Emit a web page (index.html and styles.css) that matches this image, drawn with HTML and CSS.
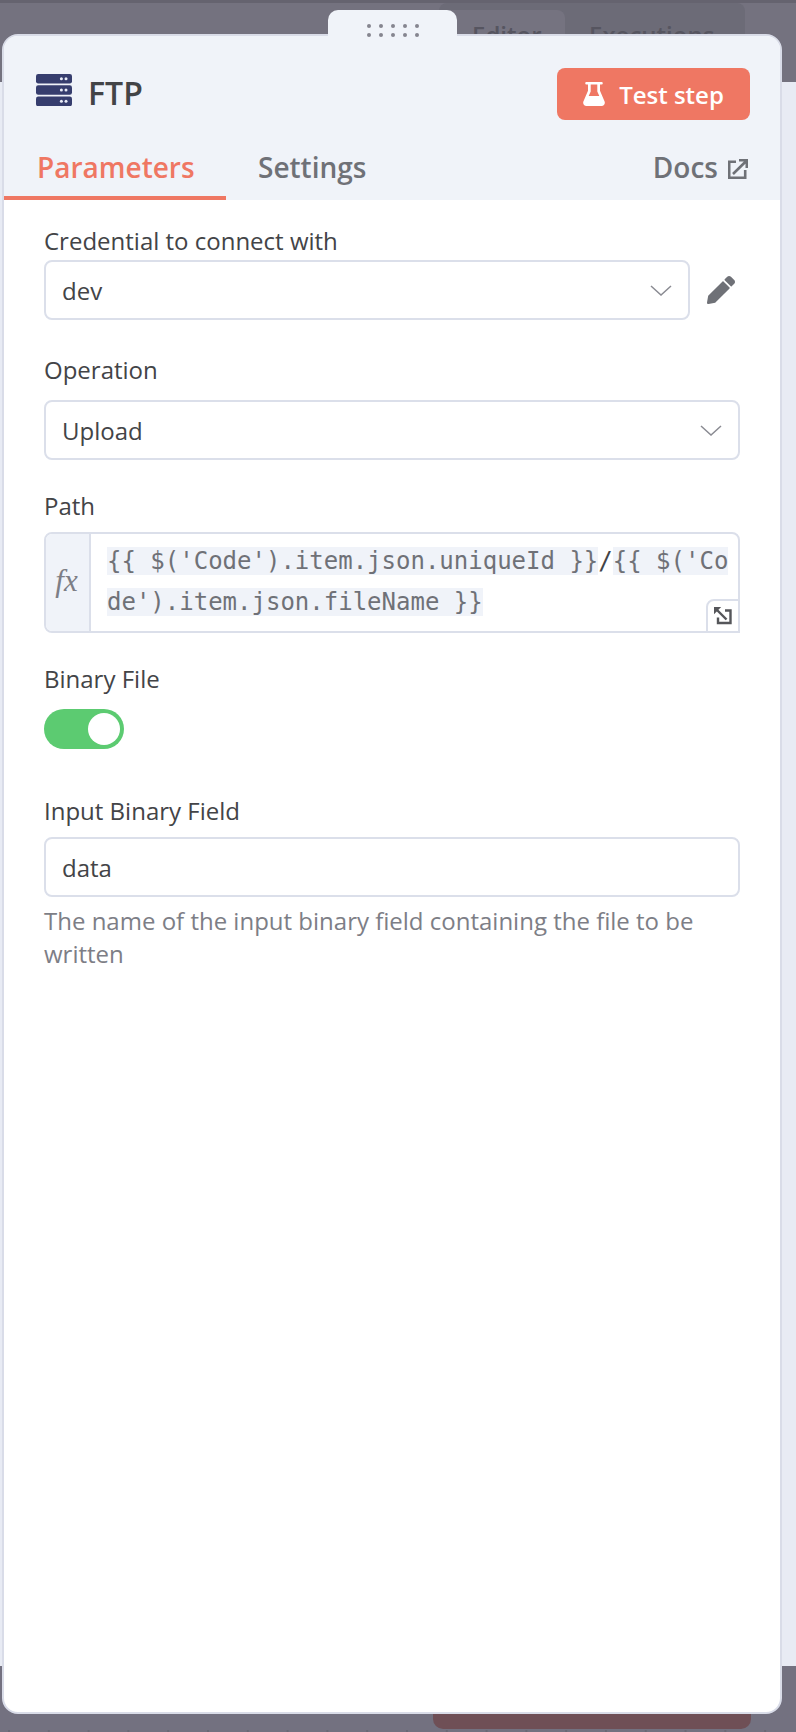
FILE: index.html
```html
<!DOCTYPE html>
<html lang="en">
<head>
<meta charset="utf-8">
<title>FTP</title>
<link rel="stylesheet" href="styles.css">
</head>
<body>
<div class="backdrop">
  <div class="topbar">
    <div class="switcher">
      <div class="switch-tab switch-active">Editor</div>
      <div class="switch-tab switch-second">Executions</div>
    </div>
  </div>
  <div class="canvas"></div>
  <div class="footer">
    <div class="footer-button"></div>
  </div>
  <div class="dots"></div>
</div>

<div class="handle" aria-hidden="true">
  <div class="handle-dots">
    <i></i><i></i><i></i><i></i><i></i>
    <i></i><i></i><i></i><i></i><i></i>
  </div>
</div>

<main class="panel">
  <header class="head">
    <div class="title-row">
      <div class="title">
        <svg class="server" viewBox="0 0 36 32" aria-hidden="true">
          <rect x="0" y="0" width="36" height="9.5" rx="2.2"/>
          <rect x="0" y="11.3" width="36" height="9.5" rx="2.2"/>
          <rect x="0" y="22.6" width="36" height="9.5" rx="2.2"/>
          <g class="led">
            <circle cx="25.4" cy="4.8" r="1.5"/><circle cx="30" cy="4.8" r="1.5"/>
            <circle cx="25.4" cy="16" r="1.5"/><circle cx="30" cy="16" r="1.5"/>
            <circle cx="25.4" cy="27.3" r="1.5"/><circle cx="30" cy="27.3" r="1.5"/>
          </g>
        </svg>
        <span class="title-text">FTP</span>
      </div>
      <button class="test-btn" type="button">
        <svg class="flask" viewBox="0 0 22 24" aria-hidden="true">
          <path d="M3.500 0h15a1 1 0 0 1 0 2.600H17v6.200l4.600 10.600c.8 2.100-.6 4.600-3 4.600H3.400c-2.400 0-3.800-2.500-3-4.600L5 8.800V2.600H3.500a1 1 0 0 1 0-2.600zM7.700 2.600v6.800L5.700 14h10.600l-2-4.600V2.600z" fill-rule="evenodd"/>
        </svg>
        <span>Test step</span>
      </button>
    </div>
    <nav class="tabs">
      <a class="tab tab-active">Parameters</a>
      <a class="tab tab-second">Settings</a>
      <a class="tab tab-docs">Docs
        <svg class="ext" viewBox="0 0 20 20" aria-hidden="true">
          <path d="M8 2.800H1.200v16h16V11"/>
          <path d="M5 15L18.500 1.800M11 1.300h7.800V9"/>
        </svg>
      </a>
    </nav>
  </header>

  <section class="form">
    <div class="param-first">
      <label class="label label-tight">Credential to connect with</label>
      <div class="cred-row">
        <div class="input select">dev
          <svg class="chev" viewBox="0 0 22 11" aria-hidden="true"><path d="M1 1l10 9 10-9"/></svg>
        </div>
        <svg class="pencil" viewBox="0 0 512 512" aria-hidden="true">
          <path d="M497.900 142.100l-46.100 46.100c-4.700 4.700-12.300 4.700-17 0l-111-111c-4.700-4.700-4.700-12.300 0-17l46.100-46.100c18.700-18.700 49.100-18.700 67.900 0l60.100 60.100c18.800 18.700 18.800 49.100 0 67.900zM284.200 99.800L21.600 362.400.4 483.900c-2.900 16.400 11.400 30.600 27.800 27.800l121.500-21.300 262.600-262.600c4.700-4.700 4.700-12.300 0-17l-111-111c-4.800-4.700-12.400-4.700-17.100 0z"/>
        </svg>
      </div>
    </div>

    <div class="param-operation">
      <label class="label label-wide">Operation</label>
      <div class="input select">Upload
        <svg class="chev" viewBox="0 0 22 11" aria-hidden="true"><path d="M1 1l10 9 10-9"/></svg>
      </div>
    </div>

    <div class="param">
      <label class="label">Path</label>
      <div class="expr">
        <div class="fx">fx</div>
        <div class="code"><span class="res">{{ $('Code').item.json.uniqueId }}</span>/<span class="res">{{ $('Code').item.json.fileName }}</span></div>
        <div class="expand">
          <svg viewBox="0 0 20 20" aria-hidden="true">
            <path class="expand-arrow" d="M3 3l10.500 10.500"/>
            <path class="expand-head" d="M1 1h7.200L1 8.200z"/>
            <path class="expand-arrow" d="M12 4.500h5.500v12.500H5V11.500"/>
          </svg>
        </div>
      </div>
    </div>

    <div class="param">
      <label class="label label-wide">Binary File</label>
      <div class="toggle"><span class="knob"></span></div>
    </div>

    <div class="param-last">
      <label class="label">Input Binary Field</label>
      <div class="input">data</div>
      <p class="hint">The name of the input binary field containing the file to be written</p>
    </div>
  </section>
</main>
</body>
</html>
```
FILE: styles.css
```css
* { box-sizing: border-box; }

html, body {
  margin: 0;
  padding: 0;
}

body {
  position: relative;
  width: 796px;
  height: 1732px;
  overflow: hidden;
  font-family: "Open Sans", "Liberation Sans", sans-serif;
  color: #434447;
  background: #737180;
}

/* Dimmed app behind the panel */
.backdrop {
  display: flex;
  flex-direction: column;
  height: 1732px;
}

.topbar {
  display: flex;
  justify-content: flex-end;
  height: 82px;
  padding-right: 51px;
  background: #74727f;
  border-top: 3px solid #65636f;
}

.switcher {
  display: flex;
  width: 306px;
  height: 60px;
  padding: 7px 1px 0;
  background: #6c6b77;
  border-radius: 8px;
}

.switch-tab {
  width: 125px;
  padding: 9px 0 0 32px;
  font-size: 24px;
  line-height: 32px;
  font-weight: 600;
  color: #565560;
  white-space: nowrap;
}

.switch-second { padding-left: 24px; }

.switch-active {
  background: #757380;
  border-radius: 8px;
}

.canvas {
  height: 1584px;
  background: #e8ebf4;
}

.footer {
  display: flex;
  justify-content: flex-end;
  flex: 1;
  padding-right: 45px;
}

.footer-button {
  width: 318px;
  height: 63px;
  background: #6f4f56;
  border-radius: 0 0 10px 10px;
}

.dots {
  height: 2px;
  background-image: linear-gradient(90deg, #686773 2px, transparent 2px);
  background-size: 39.800px 2px;
  background-position: 8px 0;
}

/* Drag handle sits over the top of the panel */
.handle {
  position: absolute;
  z-index: 1;
  left: 328px;
  top: 10px;
  width: 129px;
  height: 30px;
  background: #f0f3f9;
  border-radius: 10px 10px 0 0;
}

.handle-dots {
  display: grid;
  grid-template-columns: repeat(5, 4px);
  gap: 5px 8px;
  justify-content: center;
  padding-top: 14px;
}

.handle-dots i {
  width: 4px;
  height: 4px;
  border-radius: 50%;
  background: #85858f;
}

/* Panel */
.panel {
  position: absolute;
  left: 2px;
  top: 34px;
  width: 780px;
  height: 1680px;
  display: flex;
  flex-direction: column;
  background: #fff;
  border: 2px solid #d9dce8;
  border-radius: 16px;
  overflow: hidden;
}

.head {
  height: 164px;
  display: flex;
  flex-direction: column;
  background: #f0f3f9;
}

.title-row {
  display: flex;
  align-items: center;
  justify-content: space-between;
  height: 84px;
  padding: 32px 30px 0 32px;
}

.title {
  display: flex;
  align-items: center;
  gap: 16px;
  margin-bottom: 8px;
}

.server {
  width: 36px;
  height: 32px;
  fill: #363d6e;
}

.server .led { fill: #e9ecf7; }

.title-text {
  margin-top: 5px;
  font-size: 32px;
  line-height: 40px;
  font-weight: 600;
  color: #434447;
}

.test-btn {
  display: flex;
  align-items: center;
  justify-content: center;
  gap: 14px;
  width: 193px;
  height: 52px;
  padding: 0;
  border: 0;
  border-radius: 8px;
  background: #ef7763;
  color: #fff;
  font-family: inherit;
  font-size: 24px;
  font-weight: 600;
}

.flask {
  width: 22px;
  height: 24px;
  fill: #fff;
}

.tabs {
  display: flex;
  flex: 1;
  align-items: flex-end;
  padding-right: 32px;
  font-size: 28px;
  font-weight: 600;
  line-height: 38px;
  color: #6f7177;
}

.tab {
  display: flex;
  align-items: center;
  height: 80px;
  padding-top: 18px;
}

.tab-active {
  width: 222px;
  padding-left: 33px;
  color: #ef7763;
  border-bottom: 4px solid #ef7763;
}

.tab-second {
  margin-left: 32px;
  padding-bottom: 4px;
}

.tab-docs {
  margin-left: auto;
  padding-bottom: 4px;
  gap: 10px;
}

.ext {
  width: 20px;
  height: 20px;
  margin-top: 4px;
  fill: none;
  stroke: #6f7177;
  stroke-width: 2.600;
}

/* Form */
.form {
  flex: 1;
  display: flex;
  flex-direction: column;
  padding: 25px 40px 0 40px;
}

.param { margin-top: 30px; }
.param-first { margin-top: 0; }
.param-operation { margin-top: 34px; }
.param-last { margin-top: 46px; }

.label {
  display: block;
  height: 32px;
  margin-bottom: 10px;
  font-size: 24px;
  line-height: 32px;
}

.label-tight { margin-bottom: 3px; }
.label-wide { margin-bottom: 14px; }

.input {
  position: relative;
  display: flex;
  align-items: center;
  height: 60px;
  padding: 0 16px;
  font-size: 24px;
  background: #fff;
  border: 2px solid #dbdfea;
  border-radius: 8px;
}

.cred-row {
  display: flex;
  align-items: center;
  gap: 17px;
}

.cred-row .input { width: 646px; }

.chev {
  position: absolute;
  right: 16px;
  top: 23px;
  width: 22px;
  height: 11px;
  fill: none;
  stroke: #8a8b92;
  stroke-width: 1.500;
}

.pencil {
  width: 28px;
  height: 28px;
  fill: #6f7177;
}

/* Expression field */
.expr {
  position: relative;
  display: flex;
  height: 101px;
  background: #fff;
  border: 2px solid #dbdfea;
  border-radius: 8px 8px 0 8px;
}

.fx {
  display: flex;
  align-items: center;
  justify-content: center;
  width: 45px;
  flex: none;
  padding: 0 2px 4px 0;
  font-family: "Liberation Serif", serif;
  font-size: 31px;
  font-style: italic;
  color: #7d7e86;
  background: #f0f3f9;
  border-right: 2px solid #dbdfea;
  border-radius: 6px 0 0 6px;
}

.code {
  flex: 1;
  padding: 7px 0 0 16px;
  font-family: "DejaVu Sans Mono", "Liberation Mono", monospace;
  font-size: 24px;
  line-height: 41.300px;
  white-space: pre-wrap;
  word-break: break-all;
  color: #434447;
}

.res {
  color: #6f7177;
  background: #f0f3f9;
}

.expand {
  position: absolute;
  right: -2px;
  bottom: -2px;
  display: flex;
  align-items: center;
  justify-content: center;
  width: 34px;
  height: 34px;
  background: #fff;
  border: 2px solid #dbdfea;
  border-radius: 8px 0 0 0;
}

.expand svg {
  width: 20px;
  height: 20px;
}

.expand-arrow {
  fill: none;
  stroke: #55565a;
  stroke-width: 2.400;
}

.expand-head { fill: #55565a; }

/* Toggle */
.toggle {
  display: flex;
  justify-content: flex-end;
  align-items: center;
  width: 80px;
  height: 40px;
  padding-right: 4px;
  background: #5ccb71;
  border-radius: 20px;
}

.knob {
  width: 32px;
  height: 32px;
  background: #fff;
  border-radius: 50%;
}

.hint {
  margin: 7px 0 0;
  font-size: 24px;
  line-height: 33px;
  color: #7d7e86;
}
```
